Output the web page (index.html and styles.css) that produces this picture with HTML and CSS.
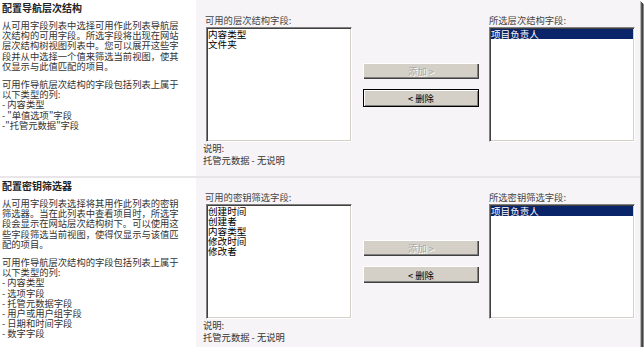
FILE: index.html
```html
<!DOCTYPE html>
<html lang="zh-CN">
<head>
    <meta charset="UTF-8">
    <title>配置导航层次结构</title>
    <link rel="stylesheet" href="styles.css">
</head>
<body>
    <div class="page">
        <section class="block block-first">
            <div class="intro">
                <h2>配置导航层次结构</h2>
                <p>从可用字段列表中选择可用作此列表导航层次结构的可用字段。所选字段将出现在网站层次结构树视图列表中。您可以展开这些字段并从中选择一个值来筛选当前视图，使其仅显示与此值匹配的项目。</p>
                <p>可用作导航层次结构的字段包括列表上属于以下类型的列:<br>- 内容类型<br>- "单值选项"字段<br>-"托管元数据"字段</p>
            </div>
            <div class="picker">
                <div class="cap cap-left">可用的层次结构字段:</div>
                <div class="cap cap-right">所选层次结构字段:</div>
                <ul class="listbox list-left">
                    <li>内容类型</li>
                    <li>文件夹</li>
                </ul>
                <div class="actions">
                    <button class="btn" disabled>添加 &gt;</button>
                    <button class="btn btn-focus">&lt; 删除</button>
                </div>
                <ul class="listbox list-right">
                    <li class="selected">项目负责人</li>
                </ul>
                <div class="note">说明:<br>托管元数据 - 无说明</div>
            </div>
        </section>

        <section class="block block-second">
            <div class="intro">
                <h2>配置密钥筛选器</h2>
                <p>从可用字段列表选择将其用作此列表的密钥筛选器。当在此列表中查看项目时，所选字段会显示在网站层次结构树下。可以使用这些字段筛选当前视图，使得仅显示与该值匹配的项目。</p>
                <p>可用作导航层次结构的字段包括列表上属于以下类型的列:<br>- 内容类型<br>- 选项字段<br>- 托管元数据字段<br>- 用户或用户组字段<br>- 日期和时间字段<br>- 数字字段</p>
            </div>
            <div class="picker">
                <div class="cap cap-left">可用的密钥筛选字段:</div>
                <div class="cap cap-right">所选密钥筛选字段:</div>
                <ul class="listbox list-left">
                    <li>创建时间</li>
                    <li>创建者</li>
                    <li>内容类型</li>
                    <li>修改时间</li>
                    <li>修改者</li>
                </ul>
                <div class="actions">
                    <button class="btn" disabled>添加 &gt;</button>
                    <button class="btn">&lt; 删除</button>
                </div>
                <ul class="listbox list-right">
                    <li class="selected">项目负责人</li>
                </ul>
                <div class="note">说明:<br>托管元数据 - 无说明</div>
            </div>
        </section>
    </div>
</body>
</html>
```

FILE: styles.css
```css
body {
    margin: 0;
    background: #ffffff;
    font-family: "Noto Sans CJK SC", "Liberation Sans", sans-serif;
}

.page {
    width: 640px;
    height: 347px;
    display: flex;
    flex-direction: column;
    background: #f7f4f7;
    box-shadow: 1px 1px 0 #b4b4b4, 2px 2px 0 #5a5a5a, 3px 3px 0 #444444, 4px 4px 1px #8a8a8a;
}

.block {
    display: grid;
    grid-template-columns: 196px 1fr;
}

.block-first {
    border-bottom: 2px solid #e9e6e9;
}

.block-second {
    flex: 1;
}

/* left column: title + help text */
.intro {
    background: #ffffff;
    padding: 2px 0 0 2px;
    font-size: 9.3px;
    line-height: 10.2px;
    color: #333333;
}

.intro h2 {
    margin: 0 0 6px;
    font-size: 10px;
    line-height: 12px;
    font-weight: bold;
    color: #222222;
}

.intro p {
    width: 180px;
    margin: 0 0 8px;
}

/* right column: two list boxes with buttons */
.picker {
    display: grid;
    grid-template-columns: 146px 117px 146px;
    grid-template-rows: 13px 115px auto;
    grid-template-areas:
        "capl . capr"
        "listl acts listr"
        "note . .";
    column-gap: 10px;
    padding: 14px 0 10px 10px;
    font-size: 9.3px;
}

.block-second .picker {
    padding: 13px 0 4px 10px;
}

.cap {
    line-height: 13px;
    color: #444444;
    white-space: nowrap;
}

.cap-left {
    grid-area: capl;
    margin-left: -1px;
}

.cap-right {
    grid-area: capr;
}

.listbox {
    list-style: none;
    margin: 0;
    padding: 1px;
    overflow: hidden;
    background: #ffffff;
    border: 1px solid;
    border-color: #808080 #ffffff #ffffff #808080;
    box-shadow: inset 1px 1px #404040, inset -1px -1px #d4d0c8;
    font-size: 9.6px;
    line-height: 10px;
    color: #000000;
}

.listbox li {
    white-space: nowrap;
}

.list-left {
    grid-area: listl;
}

.list-right {
    grid-area: listr;
}

.selected {
    background: #0a246a;
    color: #ffffff;
}

.actions {
    grid-area: acts;
    align-self: center;
    display: flex;
    flex-direction: column;
    align-items: flex-end;
    gap: 10px;
}

.btn {
    width: 116px;
    height: 18px;
    padding: 0;
    border: 1px solid #000000;
    background: #d4d0c8;
    box-shadow: inset 1px 1px #ffffff, inset -1px -1px #808080;
    font-family: inherit;
    font-size: 9.3px;
    line-height: 14px;
    color: #000000;
}

.btn:disabled {
    height: 16px;
    border: none;
    box-shadow: inset 1px 1px #ffffff, inset -1px -1px #404040, inset -2px -2px #808080;
    color: #a8a8a8;
    text-shadow: 1px 1px #ffffff;
}

.block-second .btn:not(:disabled) {
    height: 17px;
    border: none;
    box-shadow: inset 1px 1px #ffffff, inset -1px -1px #404040, inset -2px -2px #808080;
}

.note {
    grid-area: note;
    margin-left: -3px;
    line-height: 12px;
    color: #333333;
    white-space: nowrap;
}
```
